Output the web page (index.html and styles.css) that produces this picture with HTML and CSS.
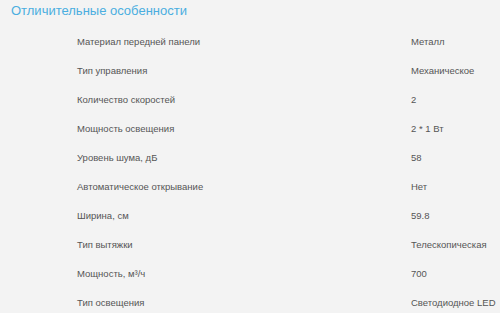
FILE: index.html
```html
<!DOCTYPE html>
<html lang="ru">
<head>
<meta charset="utf-8">
<link rel="stylesheet" href="styles.css">
</head>
<body>
<div class="page">
  <h2 class="title">Отличительные особенности</h2>
  <div class="specs">
    <div class="row"><span class="label">Материал передней панели</span><span class="value">Металл</span></div>
    <div class="row"><span class="label">Тип управления</span><span class="value">Механическое</span></div>
    <div class="row"><span class="label">Количество скоростей</span><span class="value">2</span></div>
    <div class="row"><span class="label">Мощность освещения</span><span class="value">2 * 1 Вт</span></div>
    <div class="row"><span class="label">Уровень шума, дБ</span><span class="value">58</span></div>
    <div class="row"><span class="label">Автоматическое открывание</span><span class="value">Нет</span></div>
    <div class="row"><span class="label">Ширина, см</span><span class="value">59.8</span></div>
    <div class="row"><span class="label">Тип вытяжки</span><span class="value">Телескопическая</span></div>
    <div class="row"><span class="label">Мощность, м³/ч</span><span class="value">700</span></div>
    <div class="row"><span class="label">Тип освещения</span><span class="value">Светодиодное LED</span></div>
  </div>
</div>
</body>
</html>
```
FILE: styles.css
```css
html, body {
  margin: 0;
  padding: 0;
  background: #f3f3f3;
}
.page {
  width: 500px;
  height: 313px;
  overflow: hidden;
  font-family: "Liberation Sans", Arial, sans-serif;
}
.title {
  margin: 0;
  padding: 2px 0 0 11px;
  height: 25px;
  font-size: 13px;
  font-weight: normal;
  color: #4aaee0;
  line-height: 18px;
}
.specs {
  display: flex;
  flex-direction: column;
}
.row {
  display: grid;
  grid-template-columns: 334px 1fr;
  padding-left: 77px;
  height: 29px;
  align-items: center;
  font-size: 9.5px;
  color: #555555;
}
```
